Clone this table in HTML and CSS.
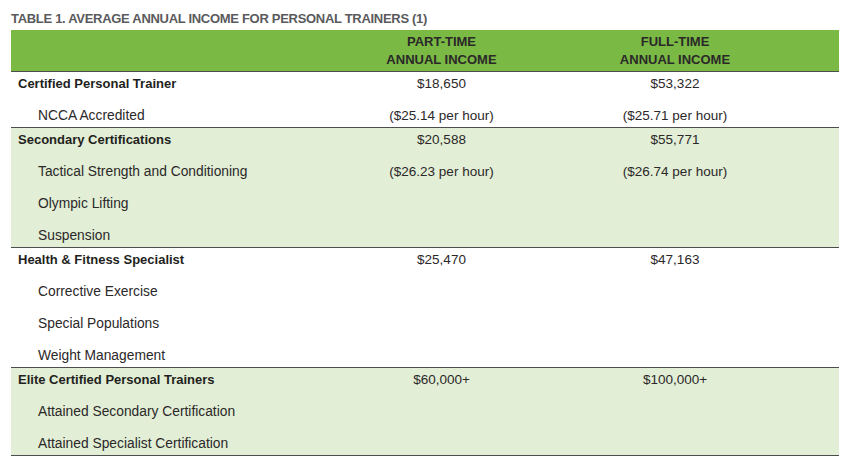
FILE: index.html
```html
<!DOCTYPE html>
<html>
<head>
<meta charset="utf-8">
<link rel="stylesheet" href="styles.css">
</head>
<body>
<div class="wrap">
  <div class="title">TABLE 1. AVERAGE ANNUAL INCOME FOR PERSONAL TRAINERS (1)</div>
  <div class="table">
    <div class="head row">
      <div></div>
      <div class="c">PART-TIME<br>ANNUAL INCOME</div>
      <div class="c">FULL-TIME<br>ANNUAL INCOME</div>
      <div></div>
    </div>
    <div class="group">
      <div class="row"><div class="lbl b">Certified Personal Trainer</div><div class="c">$18,650</div><div class="c">$53,322</div><div></div></div>
      <div class="row"><div class="lbl sub">NCCA Accredited</div><div class="c">($25.14 per hour)</div><div class="c">($25.71 per hour)</div><div></div></div>
    </div>
    <div class="group alt">
      <div class="row"><div class="lbl b">Secondary Certifications</div><div class="c">$20,588</div><div class="c">$55,771</div><div></div></div>
      <div class="row"><div class="lbl sub">Tactical Strength and Conditioning</div><div class="c">($26.23 per hour)</div><div class="c">($26.74 per hour)</div><div></div></div>
      <div class="row"><div class="lbl sub">Olympic Lifting</div><div></div><div></div><div></div></div>
      <div class="row"><div class="lbl sub">Suspension</div><div></div><div></div><div></div></div>
    </div>
    <div class="group">
      <div class="row"><div class="lbl b">Health &amp; Fitness Specialist</div><div class="c">$25,470</div><div class="c">$47,163</div><div></div></div>
      <div class="row"><div class="lbl sub">Corrective Exercise</div><div></div><div></div><div></div></div>
      <div class="row"><div class="lbl sub">Special Populations</div><div></div><div></div><div></div></div>
      <div class="row"><div class="lbl sub">Weight Management</div><div></div><div></div><div></div></div>
    </div>
    <div class="group alt">
      <div class="row"><div class="lbl b">Elite Certified Personal Trainers</div><div class="c">$60,000+</div><div class="c">$100,000+</div><div></div></div>
      <div class="row"><div class="lbl sub">Attained Secondary Certification</div><div></div><div></div><div></div></div>
      <div class="row"><div class="lbl sub">Attained Specialist Certification</div><div></div><div></div><div></div></div>
    </div>
  </div>
</div>
</body>
</html>
```
FILE: styles.css
```css
* { box-sizing: border-box; }
html, body { margin: 0; padding: 0; background: #ffffff; }
body {
  font-family: "Liberation Sans", Arial, sans-serif;
  color: #231f20;
}
.wrap {
  padding: 10px 11px 0 11px;
  width: 850px;
}
.title {
  font-weight: bold;
  font-size: 13px;
  letter-spacing: -0.3px;
  line-height: 17px;
  color: #5a5a5c;
  height: 20px;
}
.table {
  width: 828px;
}
.row {
  display: grid;
  grid-template-columns: 314px 233px 234px 47px;
  align-items: start;
}
.head {
  background: #7ab944;
  color: #ffffff;
  font-weight: bold;
  font-size: 13px;
  line-height: 18px;
  padding: 3px 0 2px 0;
  height: 42px;
  border-bottom: 1px solid #4d4d4d;
}
.group {
  display: flex;
  flex-direction: column;
  gap: 9px;
  border-bottom: 1px solid #4d4d4d;
  font-size: 13.5px;
}
.group .row { line-height: 23px; }
.alt { background: #e2eed5; }
.c { text-align: center; color: #2b2829; }
.lbl { padding-left: 7px; }
.b { font-weight: bold; font-size: 13px; }
.sub { padding-left: 27px; font-size: 13.8px; color: #2b2829; }
```
